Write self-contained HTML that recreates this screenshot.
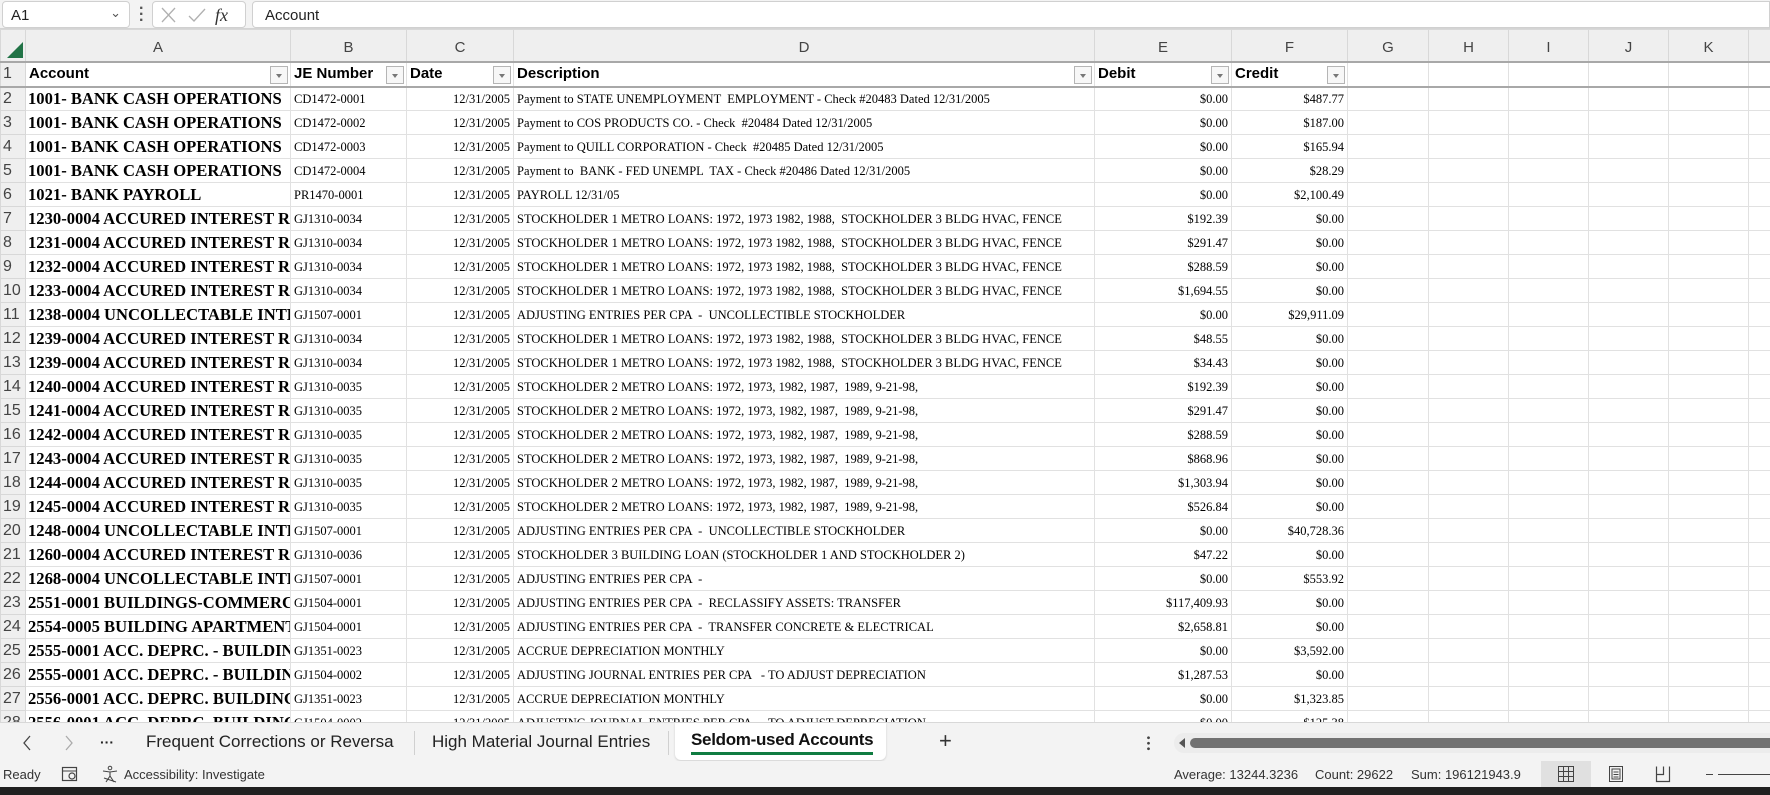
<!DOCTYPE html>
<html><head><meta charset="utf-8">
<style>
*{box-sizing:border-box;margin:0;padding:0}
body{width:1770px;height:795px;overflow:hidden;background:#fff;font-family:"Liberation Sans",sans-serif;position:relative}
.top{position:absolute;left:0;top:0;width:1770px;height:29px;background:#f3f3f3;border-bottom:1px solid #d4d4d4}
.nb{position:absolute;left:2px;top:1px;width:128px;height:27px;background:#fff;border:1px solid #d0d0d0;border-radius:4px;font-size:15px;padding:5px 8px;color:#222}
.nb .chev{position:absolute;right:8px;top:3px;font-size:13px;color:#555}
.fxb{position:absolute;left:152px;top:1px;width:94px;height:27px;background:#fff;border:1px solid #d0d0d0;border-radius:4px}
.fi{position:absolute;left:252px;top:1px;width:1518px;height:27px;background:#fff;border:1px solid #d0d0d0;border-radius:4px 0 0 4px;font-size:15px;padding:5px 12px;color:#222}
table{position:absolute;left:0;top:29px;border-collapse:collapse;table-layout:fixed;width:1770px}
td{border:1px solid #e1e1e1;height:24px;max-height:24px;white-space:pre;overflow:hidden;font-family:"Liberation Serif",serif;font-size:12.5px;color:#000;padding:0 3px;vertical-align:middle;line-height:20px}
tr.ch td{height:32px;background:#efefef;font-family:"Liberation Sans",sans-serif;font-size:15px;color:#444;text-align:center;border-color:#d8d8d8;border-bottom:2px solid #a8a8a8;padding-top:6px}
td.rh{background:#efefef;font-family:"Liberation Sans",sans-serif;font-size:16px;color:#444;text-align:left;padding-left:2px;border-color:#d8d8d8}
tr.h1 td{border-bottom:2px solid #a8a8a8;height:25px}
tr.h1 td.hd{font-family:"Liberation Sans",sans-serif;font-weight:bold;font-size:15px;position:relative;line-height:20px}
.fb{position:absolute;right:2px;top:3px;width:18px;height:18px;border:1px solid #b5b5b5;background:#f7f7f7}
.fb:after{content:"";position:absolute;left:5px;top:7px;border-left:3.5px solid transparent;border-right:3.5px solid transparent;border-top:4px solid #777}
td.a{font-weight:bold;font-size:16.6px;padding-left:2px;line-height:20px}
td.r{text-align:right}
.tabs{position:absolute;left:0;top:722px;width:1770px;height:39px;background:#f3f3f3;border-top:1px solid #d8d8d8;font-size:17px;color:#222}
.tabs span{position:absolute;top:9px}
.sep{position:absolute;top:8px;width:1px;height:24px;background:#d0d0d0}
.act{position:absolute;left:675px;top:0;width:211px;height:37px;background:#fff;border-radius:0 0 6px 6px;box-shadow:0 1px 2px rgba(0,0,0,.15)}
.status{position:absolute;left:0;top:761px;width:1770px;height:26px;background:#f3f3f3;font-size:13px;color:#333}
.status span{position:absolute;top:6px}
.dark{position:absolute;left:0;top:787px;width:1770px;height:8px;background:#202020}
</style></head><body>
<div class="top">
<div class="nb">A1<span class="chev">&#8964;</span></div>
<div style="position:absolute;left:139px;top:6px;width:3px;height:17px;font-size:16px;font-weight:bold;color:#555;line-height:6px">·<br>·<br>·</div>
<div class="fxb">
<svg width="94" height="27" style="position:absolute;left:0;top:0"><path d="M9 6 L22 20 M22 6 L9 20" stroke="#b0b0b0" stroke-width="1.3" fill="none"/><path d="M36 14 L41 19 L52 7" stroke="#b0b0b0" stroke-width="1.3" fill="none"/><text x="62" y="19" font-family="Liberation Serif" font-style="italic" font-size="18" fill="#333">fx</text></svg>
</div>
<div class="fi">Account</div>
</div>
<table>
<colgroup><col style="width:25px"><col style="width:265px"><col style="width:116px"><col style="width:107px"><col style="width:581px"><col style="width:137px"><col style="width:116px"><col style="width:81px"><col style="width:80px"><col style="width:80px"><col style="width:80px"><col style="width:80px"><col style="width:22px"></colgroup>
<tr class="ch"><td style="position:relative"><svg width="20" height="20" style="position:absolute;left:4px;top:10px"><path d="M18 2 L18 18 L2 18 Z" fill="#217346"/></svg></td><td>A</td><td>B</td><td>C</td><td>D</td><td>E</td><td>F</td><td>G</td><td>H</td><td>I</td><td>J</td><td>K</td><td></td></tr>
<tr class="h1"><td class="rh">1</td><td class="hd">Account<span class="fb"></span></td><td class="hd">JE Number<span class="fb"></span></td><td class="hd">Date<span class="fb"></span></td><td class="hd">Description<span class="fb"></span></td><td class="hd">Debit<span class="fb"></span></td><td class="hd">Credit<span class="fb"></span></td><td></td><td></td><td></td><td></td><td></td><td></td></tr>
<tr><td class="rh">2</td><td class="a">1001- BANK CASH OPERATIONS</td><td>CD1472-0001</td><td class="r">12/31/2005</td><td>Payment to STATE UNEMPLOYMENT  EMPLOYMENT - Check #20483 Dated 12/31/2005</td><td class="r">$0.00</td><td class="r">$487.77</td><td></td><td></td><td></td><td></td><td></td><td></td></tr>
<tr><td class="rh">3</td><td class="a">1001- BANK CASH OPERATIONS</td><td>CD1472-0002</td><td class="r">12/31/2005</td><td>Payment to COS PRODUCTS CO. - Check  #20484 Dated 12/31/2005</td><td class="r">$0.00</td><td class="r">$187.00</td><td></td><td></td><td></td><td></td><td></td><td></td></tr>
<tr><td class="rh">4</td><td class="a">1001- BANK CASH OPERATIONS</td><td>CD1472-0003</td><td class="r">12/31/2005</td><td>Payment to QUILL CORPORATION - Check  #20485 Dated 12/31/2005</td><td class="r">$0.00</td><td class="r">$165.94</td><td></td><td></td><td></td><td></td><td></td><td></td></tr>
<tr><td class="rh">5</td><td class="a">1001- BANK CASH OPERATIONS</td><td>CD1472-0004</td><td class="r">12/31/2005</td><td>Payment to  BANK - FED UNEMPL  TAX - Check #20486 Dated 12/31/2005</td><td class="r">$0.00</td><td class="r">$28.29</td><td></td><td></td><td></td><td></td><td></td><td></td></tr>
<tr><td class="rh">6</td><td class="a">1021- BANK PAYROLL</td><td>PR1470-0001</td><td class="r">12/31/2005</td><td>PAYROLL 12/31/05</td><td class="r">$0.00</td><td class="r">$2,100.49</td><td></td><td></td><td></td><td></td><td></td><td></td></tr>
<tr><td class="rh">7</td><td class="a">1230-0004 ACCURED INTEREST RECEIVABLE</td><td>GJ1310-0034</td><td class="r">12/31/2005</td><td>STOCKHOLDER 1 METRO LOANS: 1972, 1973 1982, 1988,  STOCKHOLDER 3 BLDG HVAC, FENCE</td><td class="r">$192.39</td><td class="r">$0.00</td><td></td><td></td><td></td><td></td><td></td><td></td></tr>
<tr><td class="rh">8</td><td class="a">1231-0004 ACCURED INTEREST RECEIVABLE</td><td>GJ1310-0034</td><td class="r">12/31/2005</td><td>STOCKHOLDER 1 METRO LOANS: 1972, 1973 1982, 1988,  STOCKHOLDER 3 BLDG HVAC, FENCE</td><td class="r">$291.47</td><td class="r">$0.00</td><td></td><td></td><td></td><td></td><td></td><td></td></tr>
<tr><td class="rh">9</td><td class="a">1232-0004 ACCURED INTEREST RECEIVABLE</td><td>GJ1310-0034</td><td class="r">12/31/2005</td><td>STOCKHOLDER 1 METRO LOANS: 1972, 1973 1982, 1988,  STOCKHOLDER 3 BLDG HVAC, FENCE</td><td class="r">$288.59</td><td class="r">$0.00</td><td></td><td></td><td></td><td></td><td></td><td></td></tr>
<tr><td class="rh">10</td><td class="a">1233-0004 ACCURED INTEREST RECEIVABLE</td><td>GJ1310-0034</td><td class="r">12/31/2005</td><td>STOCKHOLDER 1 METRO LOANS: 1972, 1973 1982, 1988,  STOCKHOLDER 3 BLDG HVAC, FENCE</td><td class="r">$1,694.55</td><td class="r">$0.00</td><td></td><td></td><td></td><td></td><td></td><td></td></tr>
<tr><td class="rh">11</td><td class="a">1238-0004 UNCOLLECTABLE INTEREST</td><td>GJ1507-0001</td><td class="r">12/31/2005</td><td>ADJUSTING ENTRIES PER CPA  -  UNCOLLECTIBLE STOCKHOLDER</td><td class="r">$0.00</td><td class="r">$29,911.09</td><td></td><td></td><td></td><td></td><td></td><td></td></tr>
<tr><td class="rh">12</td><td class="a">1239-0004 ACCURED INTEREST RECEIVABLE</td><td>GJ1310-0034</td><td class="r">12/31/2005</td><td>STOCKHOLDER 1 METRO LOANS: 1972, 1973 1982, 1988,  STOCKHOLDER 3 BLDG HVAC, FENCE</td><td class="r">$48.55</td><td class="r">$0.00</td><td></td><td></td><td></td><td></td><td></td><td></td></tr>
<tr><td class="rh">13</td><td class="a">1239-0004 ACCURED INTEREST RECEIVABLE</td><td>GJ1310-0034</td><td class="r">12/31/2005</td><td>STOCKHOLDER 1 METRO LOANS: 1972, 1973 1982, 1988,  STOCKHOLDER 3 BLDG HVAC, FENCE</td><td class="r">$34.43</td><td class="r">$0.00</td><td></td><td></td><td></td><td></td><td></td><td></td></tr>
<tr><td class="rh">14</td><td class="a">1240-0004 ACCURED INTEREST RECEIVABLE</td><td>GJ1310-0035</td><td class="r">12/31/2005</td><td>STOCKHOLDER 2 METRO LOANS: 1972, 1973, 1982, 1987,  1989, 9-21-98,</td><td class="r">$192.39</td><td class="r">$0.00</td><td></td><td></td><td></td><td></td><td></td><td></td></tr>
<tr><td class="rh">15</td><td class="a">1241-0004 ACCURED INTEREST RECEIVABLE</td><td>GJ1310-0035</td><td class="r">12/31/2005</td><td>STOCKHOLDER 2 METRO LOANS: 1972, 1973, 1982, 1987,  1989, 9-21-98,</td><td class="r">$291.47</td><td class="r">$0.00</td><td></td><td></td><td></td><td></td><td></td><td></td></tr>
<tr><td class="rh">16</td><td class="a">1242-0004 ACCURED INTEREST RECEIVABLE</td><td>GJ1310-0035</td><td class="r">12/31/2005</td><td>STOCKHOLDER 2 METRO LOANS: 1972, 1973, 1982, 1987,  1989, 9-21-98,</td><td class="r">$288.59</td><td class="r">$0.00</td><td></td><td></td><td></td><td></td><td></td><td></td></tr>
<tr><td class="rh">17</td><td class="a">1243-0004 ACCURED INTEREST RECEIVABLE</td><td>GJ1310-0035</td><td class="r">12/31/2005</td><td>STOCKHOLDER 2 METRO LOANS: 1972, 1973, 1982, 1987,  1989, 9-21-98,</td><td class="r">$868.96</td><td class="r">$0.00</td><td></td><td></td><td></td><td></td><td></td><td></td></tr>
<tr><td class="rh">18</td><td class="a">1244-0004 ACCURED INTEREST RECEIVABLE</td><td>GJ1310-0035</td><td class="r">12/31/2005</td><td>STOCKHOLDER 2 METRO LOANS: 1972, 1973, 1982, 1987,  1989, 9-21-98,</td><td class="r">$1,303.94</td><td class="r">$0.00</td><td></td><td></td><td></td><td></td><td></td><td></td></tr>
<tr><td class="rh">19</td><td class="a">1245-0004 ACCURED INTEREST RECEIVABLE</td><td>GJ1310-0035</td><td class="r">12/31/2005</td><td>STOCKHOLDER 2 METRO LOANS: 1972, 1973, 1982, 1987,  1989, 9-21-98,</td><td class="r">$526.84</td><td class="r">$0.00</td><td></td><td></td><td></td><td></td><td></td><td></td></tr>
<tr><td class="rh">20</td><td class="a">1248-0004 UNCOLLECTABLE INTEREST</td><td>GJ1507-0001</td><td class="r">12/31/2005</td><td>ADJUSTING ENTRIES PER CPA  -  UNCOLLECTIBLE STOCKHOLDER</td><td class="r">$0.00</td><td class="r">$40,728.36</td><td></td><td></td><td></td><td></td><td></td><td></td></tr>
<tr><td class="rh">21</td><td class="a">1260-0004 ACCURED INTEREST RECEIVABLE</td><td>GJ1310-0036</td><td class="r">12/31/2005</td><td>STOCKHOLDER 3 BUILDING LOAN (STOCKHOLDER 1 AND STOCKHOLDER 2)</td><td class="r">$47.22</td><td class="r">$0.00</td><td></td><td></td><td></td><td></td><td></td><td></td></tr>
<tr><td class="rh">22</td><td class="a">1268-0004 UNCOLLECTABLE INTEREST</td><td>GJ1507-0001</td><td class="r">12/31/2005</td><td>ADJUSTING ENTRIES PER CPA  -</td><td class="r">$0.00</td><td class="r">$553.92</td><td></td><td></td><td></td><td></td><td></td><td></td></tr>
<tr><td class="rh">23</td><td class="a">2551-0001 BUILDINGS-COMMERCIAL</td><td>GJ1504-0001</td><td class="r">12/31/2005</td><td>ADJUSTING ENTRIES PER CPA  -  RECLASSIFY ASSETS: TRANSFER</td><td class="r">$117,409.93</td><td class="r">$0.00</td><td></td><td></td><td></td><td></td><td></td><td></td></tr>
<tr><td class="rh">24</td><td class="a">2554-0005 BUILDING APARTMENTS</td><td>GJ1504-0001</td><td class="r">12/31/2005</td><td>ADJUSTING ENTRIES PER CPA  -  TRANSFER CONCRETE &amp; ELECTRICAL</td><td class="r">$2,658.81</td><td class="r">$0.00</td><td></td><td></td><td></td><td></td><td></td><td></td></tr>
<tr><td class="rh">25</td><td class="a">2555-0001 ACC. DEPRC. - BUILDINGS</td><td>GJ1351-0023</td><td class="r">12/31/2005</td><td>ACCRUE DEPRECIATION MONTHLY</td><td class="r">$0.00</td><td class="r">$3,592.00</td><td></td><td></td><td></td><td></td><td></td><td></td></tr>
<tr><td class="rh">26</td><td class="a">2555-0001 ACC. DEPRC. - BUILDINGS</td><td>GJ1504-0002</td><td class="r">12/31/2005</td><td>ADJUSTING JOURNAL ENTRIES PER CPA   - TO ADJUST DEPRECIATION</td><td class="r">$1,287.53</td><td class="r">$0.00</td><td></td><td></td><td></td><td></td><td></td><td></td></tr>
<tr><td class="rh">27</td><td class="a">2556-0001 ACC. DEPRC. BUILDINGS</td><td>GJ1351-0023</td><td class="r">12/31/2005</td><td>ACCRUE DEPRECIATION MONTHLY</td><td class="r">$0.00</td><td class="r">$1,323.85</td><td></td><td></td><td></td><td></td><td></td><td></td></tr>
<tr><td class="rh">28</td><td class="a">2556-0001 ACC. DEPRC. BUILDINGS</td><td>GJ1504-0002</td><td class="r">12/31/2005</td><td>ADJUSTING JOURNAL ENTRIES PER CPA   - TO ADJUST DEPRECIATION</td><td class="r">$0.00</td><td class="r">$125.38</td><td></td><td></td><td></td><td></td><td></td><td></td></tr>
</table>
<div class="tabs">
<svg width="10" height="16" style="position:absolute;left:22px;top:12px"><path d="M8 1 L2 8 L8 15" stroke="#444" stroke-width="1.3" fill="none"/></svg>
<svg width="10" height="16" style="position:absolute;left:64px;top:12px"><path d="M2 1 L8 8 L2 15" stroke="#aaa" stroke-width="1.3" fill="none"/></svg>
<span style="left:100px;font-size:14px;top:11px;font-weight:bold">&middot;&middot;&middot;</span>
<span style="left:146px">Frequent Corrections or Reversa</span>
<div class="sep" style="left:414px"></div>
<span style="left:432px">High Material Journal Entries</span>
<div class="sep" style="left:668px"></div>
<div class="act"></div>
<span style="left:691px;top:7px;font-weight:bold;color:#111;letter-spacing:-0.3px">Seldom-used Accounts</span>
<div style="position:absolute;left:691px;top:29px;width:182px;height:3px;background:#107c41"></div>
<span style="left:939px;font-size:22px;top:5px;color:#333">+</span>
<div style="position:absolute;left:1147px;top:12px;width:3px;height:16px;background:radial-gradient(circle,#444 1.2px,transparent 1.6px) 0 0/3px 5.5px"></div>
<div style="position:absolute;left:1174px;top:10px;width:596px;height:20px;background:#ececec;border-radius:10px 0 0 10px"></div>
<svg width="10" height="12" style="position:absolute;left:1177px;top:14px"><path d="M8 1 L2 6 L8 11 Z" fill="#555"/></svg>
<div style="position:absolute;left:1190px;top:15px;width:580px;height:10px;background:#727272;border-radius:5px 0 0 5px"></div>
</div>
<div class="status">
<span style="left:3px">Ready</span>
<svg width="18" height="18" style="position:absolute;left:61px;top:4px"><rect x="1.5" y="2.5" width="14" height="13" fill="none" stroke="#444" stroke-width="1.2"/><path d="M1.5 6 H15.5" stroke="#444"/><circle cx="11" cy="11" r="3" fill="none" stroke="#444" stroke-width="1.2"/></svg>
<svg width="18" height="18" style="position:absolute;left:101px;top:4px"><circle cx="9" cy="3" r="1.8" fill="none" stroke="#444"/><path d="M2 6 L9 7 L16 6 M9 7 L9 11 L5 17 M9 11 L13 17 M3 13 L15 17" stroke="#444" fill="none" stroke-width="1.1"/></svg>
<span style="left:124px">Accessibility: Investigate</span>
<span style="left:1174px">Average: 13244.3236</span>
<span style="left:1315px">Count: 29622</span>
<span style="left:1411px">Sum: 196121943.9</span>
<div style="position:absolute;left:1541px;top:0;width:50px;height:26px;background:#e0e0e0"></div>
<svg width="18" height="18" style="position:absolute;left:1557px;top:4px"><rect x="1.5" y="1.5" width="15" height="15" fill="none" stroke="#444"/><path d="M6.5 1.5 V16.5 M11.5 1.5 V16.5 M1.5 6.5 H16.5 M1.5 11.5 H16.5" stroke="#444"/></svg>
<svg width="18" height="18" style="position:absolute;left:1607px;top:4px"><rect x="2.5" y="1.5" width="13" height="15" fill="none" stroke="#444"/><rect x="5" y="4" width="8" height="10" fill="none" stroke="#444"/><path d="M6.5 7 H11.5 M6.5 9.5 H11.5 M6.5 12 H11.5" stroke="#444"/></svg>
<svg width="18" height="18" style="position:absolute;left:1654px;top:4px"><path d="M2.5 1.5 V16.5 H15.5 V1.5 M2.5 9.5 H9.5 V1.5" fill="none" stroke="#444" stroke-width="1.2"/></svg>
<div style="position:absolute;left:1706px;top:13px;width:7px;height:1px;background:#444"></div>
<div style="position:absolute;left:1718px;top:13px;width:52px;height:1px;background:#444"></div>
</div>
<div class="dark"></div>
</body></html>
